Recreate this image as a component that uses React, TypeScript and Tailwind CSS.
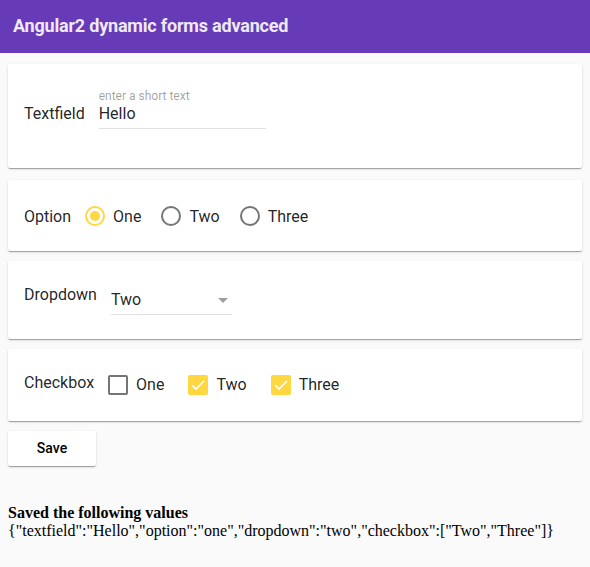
import React from "react";

const card =
  "bg-white rounded-[2px] shadow-[0_2px_1px_-1px_rgba(0,0,0,0.2),0_1px_1px_0_rgba(0,0,0,0.14),0_1px_3px_0_rgba(0,0,0,0.12)]";

function Radio({ checked }: { checked?: boolean }) {
  return (
    <span
      className={
        "w-5 h-5 rounded-full border-2 flex items-center justify-center shrink-0 " +
        (checked ? "border-[#ffd740]" : "border-[#757575]")
      }
    >
      {checked && <span className="w-[10px] h-[10px] rounded-full bg-[#ffd740]" />}
    </span>
  );
}

function Check({ checked }: { checked?: boolean }) {
  return checked ? (
    <span className="w-5 h-5 rounded-[2px] bg-[#ffd740] flex items-center justify-center shrink-0">
      <svg width="16" height="16" viewBox="0 0 24 24">
        <path d="M3.5 12.5l5.5 5.5L21 6" fill="none" stroke="white" strokeWidth="2.6" />
      </svg>
    </span>
  ) : (
    <span className="w-5 h-5 rounded-[2px] border-2 border-[#757575] shrink-0" />
  );
}

export default function App() {
  return (
    <div
      className="min-h-[567px] bg-[#fafafa] text-[rgba(0,0,0,0.87)]"
      style={{ fontFamily: "Roboto, 'Liberation Sans', sans-serif" }}
    >
      <div className="h-[53px] bg-[#673ab7] flex items-center pl-[13px]">
        <span className="text-[18px] font-bold tracking-[-0.2px] text-[#efe9f5] leading-none -mt-[1px]">
          Angular2 dynamic forms advanced
        </span>
      </div>

      <div className="px-2 pt-[11px] flex flex-col">
        <div className={card + " h-[104px] pl-4 pt-[24px] flex items-start text-[16px]"}>
          <div className="mt-[16px] leading-5">Textfield</div>
          <div className="ml-[14px] w-[167px] flex flex-col">
            <div className="text-[12px] leading-[16px] text-[rgba(0,0,0,0.38)]">enter a short text</div>
            <div className="leading-5 pb-[4px] border-b border-[#e0e0e0]">Hello</div>
          </div>
        </div>

        <div className={card + " mt-3 h-[71px] pl-4 flex items-center text-[16px]"}>
          <span className="leading-5 mt-[2px]">Option</span>
          <div className="ml-[14px] flex items-center">
            <Radio checked />
            <span className="ml-2 leading-5 mt-[2px]">One</span>
          </div>
          <div className="ml-5 flex items-center">
            <Radio />
            <span className="ml-2 leading-5 mt-[2px]">Two</span>
          </div>
          <div className="ml-5 flex items-center">
            <Radio />
            <span className="ml-2 leading-5 mt-[2px]">Three</span>
          </div>
        </div>

        <div className={card + " mt-[10px] h-[78px] pl-4 pt-[24px] flex items-start text-[16px]"}>
          <span className="leading-5">Dropdown</span>
          <div className="ml-[14px] mt-[5px] w-[121px] flex items-center justify-between pb-[4px] border-b border-[#e0e0e0]">
            <span className="leading-5">Two</span>
            <svg width="10" height="5" viewBox="0 0 10 5" className="mr-[4px] mt-[1px]">
              <path d="M0 0h10L5 5z" fill="rgba(0,0,0,0.38)" />
            </svg>
          </div>
        </div>

        <div className={card + " mt-[10px] h-[72px] pl-4 flex items-center text-[16px]"}>
          <span className="leading-5 mb-[5px]">Checkbox</span>
          <div className="ml-[14px] flex items-center">
            <Check />
            <span className="ml-2 leading-5">One</span>
          </div>
          <div className="ml-6 flex items-center">
            <Check checked />
            <span className="ml-2 leading-5">Two</span>
          </div>
          <div className="ml-6 flex items-center">
            <Check checked />
            <span className="ml-2 leading-5">Three</span>
          </div>
        </div>

        <div className="mt-[10px]">
          <button
            className={card + " w-[88px] h-[35px] text-[14px] font-medium text-black flex items-center justify-center"}
          >
            Save
          </button>
        </div>

        <div
          className="mt-[38px] text-[16px] text-black leading-[18px]"
          style={{ fontFamily: "'Liberation Serif', 'Times New Roman', serif" }}
        >
          <div className="font-bold">Saved the following values</div>
          <div>{'{"textfield":"Hello","option":"one","dropdown":"two","checkbox":["Two","Three"]}'}</div>
        </div>
      </div>
    </div>
  );
}
